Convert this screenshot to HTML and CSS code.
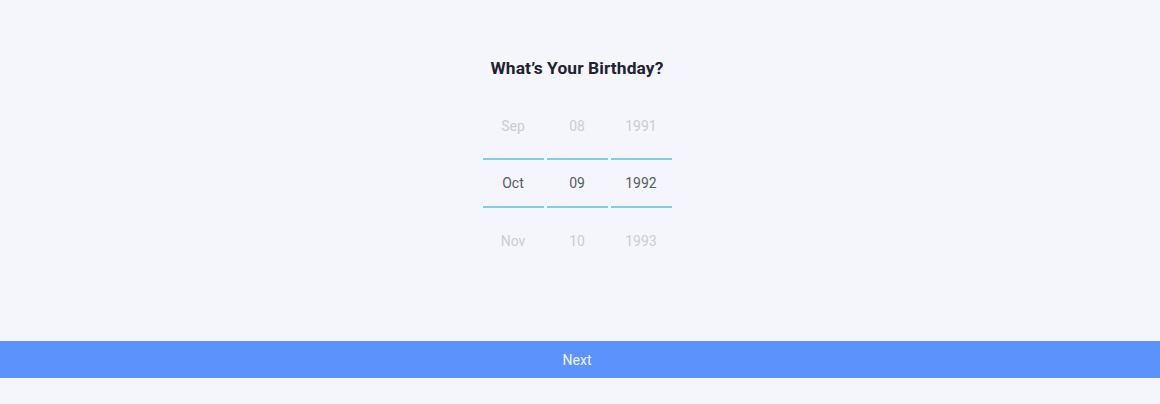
FILE: index.html
```html
<!DOCTYPE html>
<html>
<head>
<meta charset="utf-8">
<link rel="stylesheet" href="styles.css">
</head>
<body>
<div class="page">
  <main class="content">
    <h1 class="title">What’s Your Birthday?</h1>
    <div class="picker">
      <div class="col">
        <div class="cell faded">Sep</div>
        <div class="line"></div>
        <div class="cell selected">Oct</div>
        <div class="line"></div>
        <div class="cell faded">Nov</div>
      </div>
      <div class="col">
        <div class="cell faded">08</div>
        <div class="line"></div>
        <div class="cell selected">09</div>
        <div class="line"></div>
        <div class="cell faded">10</div>
      </div>
      <div class="col">
        <div class="cell faded">1991</div>
        <div class="line"></div>
        <div class="cell selected">1992</div>
        <div class="line"></div>
        <div class="cell faded">1993</div>
      </div>
    </div>
  </main>
  <button class="next">Next</button>
  <div class="footer"></div>
</div>
</body>
</html>
```
FILE: styles.css
```css
* { box-sizing: border-box; }
html, body { margin: 0; padding: 0; }
body {
  background: #f5f6fb;
  font-family: Roboto, "Liberation Sans", sans-serif;
}
.page {
  height: 404px;
  display: flex;
  flex-direction: column;
}
.content {
  flex: 1;
  display: flex;
  flex-direction: column;
  align-items: center;
  padding-right: 6px;
}
.title {
  margin: 58px 0 0;
  font-size: 17.4px;
  line-height: 20px;
  font-weight: 700;
  letter-spacing: 0.1px;
  color: #1f2230;
}
.picker {
  margin-top: 19px;
  display: flex;
  gap: 3px;
}
.col {
  width: 61px;
  display: flex;
  flex-direction: column;
}
.cell {
  display: flex;
  align-items: center;
  justify-content: center;
  font-size: 14px;
  height: 57px;
}
.cell.selected {
  height: 46px;
  color: #555a65;
}
.cell.faded { color: #c9ccd3; }
.col .cell:first-child { margin-bottom: 4px; }
.col .cell:last-child { margin-top: 4px; }
.line {
  height: 2px;
  background: #7fd0e1;
}
.next {
  height: 37px;
  border: none;
  background: #5b92fc;
  color: #f2f6ff;
  font-family: Roboto, "Liberation Sans", sans-serif;
  font-size: 14px;
  padding: 0 6px 0 0;
  width: 100%;
}
.footer { height: 26px; }
```
